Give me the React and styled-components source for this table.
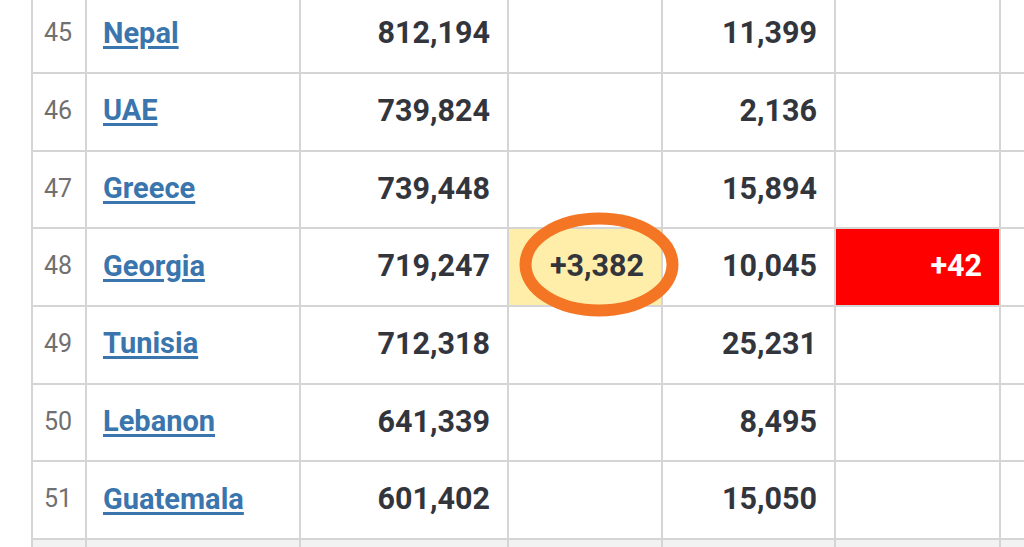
import React from 'react';
import styled, { createGlobalStyle } from 'styled-components';

const GlobalStyle = createGlobalStyle`
  html, body {
    margin: 0;
    padding: 0;
    background: #ffffff;
    font-family: Roboto, "Liberation Sans", Arial, sans-serif;
  }
`;

const rows = [
  { n: 45, country: 'Nepal', total: '812,194', deaths: '11,399' },
  { n: 46, country: 'UAE', total: '739,824', deaths: '2,136' },
  { n: 47, country: 'Greece', total: '739,448', deaths: '15,894' },
  { n: 48, country: 'Georgia', total: '719,247', newCases: '+3,382', deaths: '10,045', newDeaths: '+42' },
  { n: 49, country: 'Tunisia', total: '712,318', deaths: '25,231' },
  { n: 50, country: 'Lebanon', total: '641,339', deaths: '8,495' },
  { n: 51, country: 'Guatemala', total: '601,402', deaths: '15,050' },
];

const Page = styled.div`
  width: 1024px;
  height: 547px;
  overflow: hidden;
`;

const Table = styled.table`
  border-collapse: collapse;
  table-layout: fixed;
  margin: -5.6px 0 0 31px;
  width: 1100px;
`;

const Row = styled.tr`
  height: 77.67px;
  background: ${p => (p.$shade ? '#f2f2f2' : '#ffffff')};
`;

const Cell = styled.td`
  border: 2px solid #d5d5d5;
  padding: 0 17px 3px 16px;
  vertical-align: middle;
  white-space: nowrap;
`;

const IndexCell = styled(Cell)`
  text-align: center;
  padding: 0 2px 3px 0;
  font-size: 25px;
  color: #707070;
`;

const NumCell = styled(Cell)`
  text-align: right;
  font-size: 30.5px;
  font-weight: 700;
  position: relative;
  background: ${p => p.$bg || 'transparent'};
  color: ${p => p.$fg || '#33353d'};
`;

const CountryLink = styled.a`
  font-size: 29px;
  font-weight: 700;
  color: #3a75ad;
  text-decoration: underline;
  text-underline-offset: 3px;
  text-decoration-thickness: 3px;
`;

const Mark = styled.svg`
  position: absolute;
  left: 5px;
  top: -22px;
  overflow: visible;
  pointer-events: none;
`;

function Circled() {
  return (
    <Mark width="170" height="115" viewBox="0 0 170 115">
      <ellipse cx="85" cy="57.5" rx="73.5" ry="46" fill="none" stroke="#f47524" strokeWidth="12" />
    </Mark>
  );
}

export default function App() {
  return (
    <Page>
      <GlobalStyle />
      <Table>
        <colgroup>
          <col style={{ width: 54 }} />
          <col style={{ width: 214 }} />
          <col style={{ width: 208 }} />
          <col style={{ width: 154 }} />
          <col style={{ width: 173 }} />
          <col style={{ width: 165 }} />
          <col style={{ width: 132 }} />
        </colgroup>
        <tbody>
          {rows.map(r => (
            <Row key={r.n}>
              <IndexCell>{r.n}</IndexCell>
              <Cell>
                <CountryLink href="#">{r.country}</CountryLink>
              </Cell>
              <NumCell>{r.total}</NumCell>
              <NumCell $bg={r.newCases ? '#ffeeaa' : undefined}>
                {r.newCases}
                {r.newCases && <Circled />}
              </NumCell>
              <NumCell>{r.deaths}</NumCell>
              <NumCell $bg={r.newDeaths ? '#ff0000' : undefined} $fg={r.newDeaths ? '#ffffff' : undefined}>
                {r.newDeaths}
              </NumCell>
              <NumCell />
            </Row>
          ))}
          <Row $shade>
            <IndexCell />
            <Cell />
            <NumCell />
            <NumCell />
            <NumCell />
            <NumCell />
            <NumCell />
          </Row>
        </tbody>
      </Table>
    </Page>
  );
}
